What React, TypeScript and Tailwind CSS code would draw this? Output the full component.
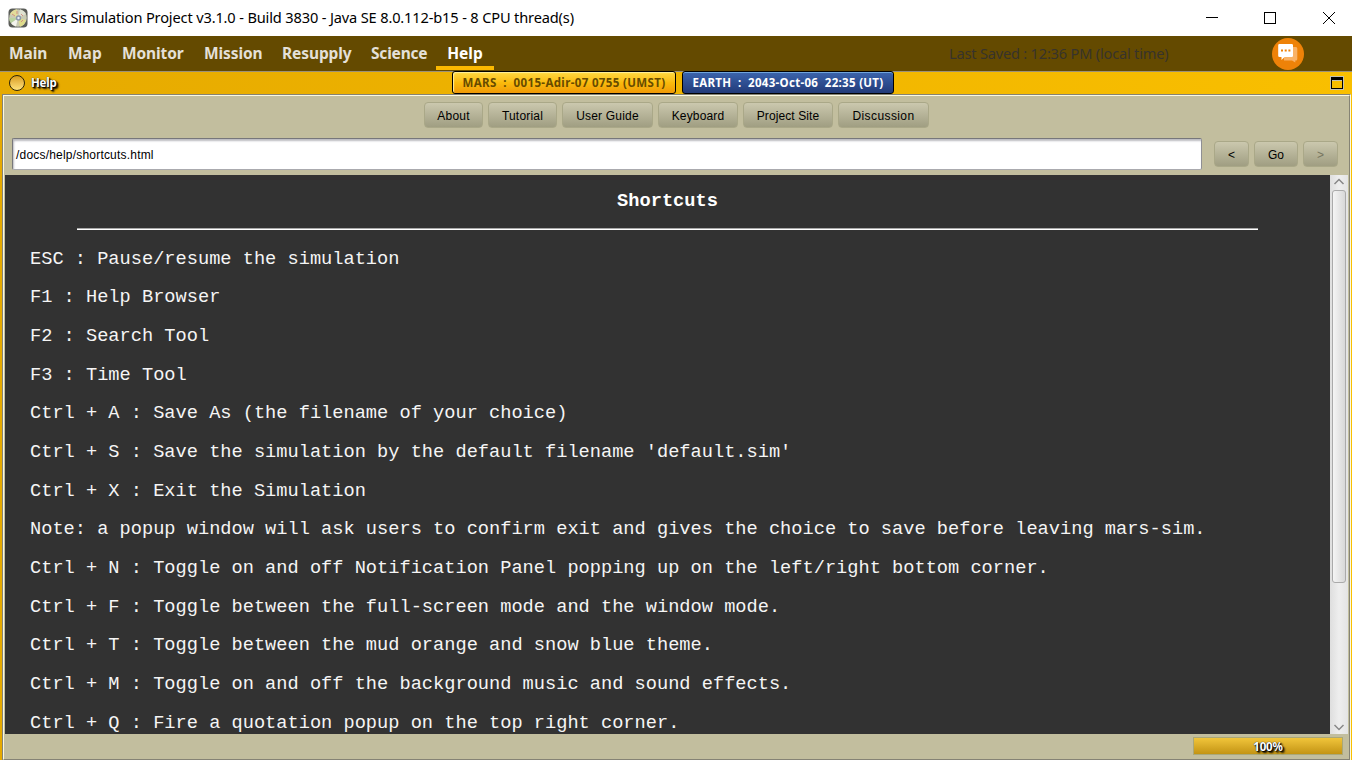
import React from "react";

const menus = [
  { label: "Main", cls: "w-[59px] tracking-[-0.1px]" },
  { label: "Map", cls: "w-[54px] tracking-[0px]" },
  { label: "Monitor", cls: "w-[82px] tracking-[-0.1px]" },
  { label: "Mission", cls: "w-[78px] tracking-[-0.1px]" },
  { label: "Resupply", cls: "w-[89px] tracking-[-0.1px]" },
  { label: "Science", cls: "w-[76px] tracking-[-0.2px]" },
];

const tools = [
  { label: "About", cls: "w-[59px] tracking-[0.2px]" },
  { label: "Tutorial", cls: "w-[69px] tracking-[0.2px]" },
  { label: "User Guide", cls: "w-[91px] tracking-[0.2px]" },
  { label: "Keyboard", cls: "w-[80px] tracking-[0.15px]" },
  { label: "Project Site", cls: "w-[90px] tracking-[0.1px]" },
  { label: "Discussion", cls: "w-[91px] tracking-[0.4px]" },
];

const shortcuts = [
  "ESC : Pause/resume the simulation",
  "F1 : Help Browser",
  "F2 : Search Tool",
  "F3 : Time Tool",
  "Ctrl + A : Save As (the filename of your choice)",
  "Ctrl + S : Save the simulation by the default filename 'default.sim'",
  "Ctrl + X : Exit the Simulation",
  "Note: a popup window will ask users to confirm exit and gives the choice to save before leaving mars-sim.",
  "Ctrl + N : Toggle on and off Notification Panel popping up on the left/right bottom corner.",
  "Ctrl + F : Toggle between the full-screen mode and the window mode.",
  "Ctrl + T : Toggle between the mud orange and snow blue theme.",
  "Ctrl + M : Toggle on and off the background music and sound effects.",
  "Ctrl + Q : Fire a quotation popup on the top right corner.",
];

function Button({ label, cls, disabled = false }: { label: string; cls: string; disabled?: boolean }) {
  return (
    <button
      disabled={disabled}
      className={`flex h-[26px] items-center justify-center rounded-[4px] border border-[#aaa888] bg-linear-to-b from-[#cbc8ae] to-[#a09e82] pt-[2px] font-['Liberation_Sans',sans-serif] text-[12px] whitespace-pre ${disabled ? "text-[#77755f]" : "text-black"} ${cls}`}
    >
      {label}
    </button>
  );
}

function AppIcon() {
  return (
    <svg width="20" height="20" viewBox="0 0 20 20">
      <rect x="0.5" y="0.5" width="19" height="19" rx="4" fill="#5a5c58" />
      <circle cx="10" cy="10" r="8.8" fill="#c9cbb4" />
      <path d="M10 10L2 6A9 9 0 0 1 9 1.200Z" fill="#e3dd9a" />
      <path d="M10 10L12 1.300A9 9 0 0 1 18 6Z" fill="#dfe2d2" />
      <path d="M10 10L18 12A9 9 0 0 1 12 18.700Z" fill="#dfdc8b" />
      <path d="M10 10L8 18.500A9 9 0 0 1 3 15Z" fill="#f4f4ee" />
      <path d="M10 10L3 15A9 9 0 0 1 1.200 10Z" fill="#b9d3a0" />
      <path d="M4 6l3 2M13 6l2 2M13 14l2-2M9 3v3" stroke="#d18f83" strokeWidth="1" />
      <circle cx="10.500" cy="10" r="2.700" fill="#8b98aa" />
      <circle cx="10.500" cy="10" r="1.200" fill="#e8edf2" />
    </svg>
  );
}

function ChatIcon() {
  return (
    <svg width="32" height="32" viewBox="0 0 32 32">
      <circle cx="16" cy="16" r="16" fill="#ee8208" />
      <path d="M12 9H24Q25.300 9 25.300 10.500V21Q25.300 22.500 24 22.500H23.300V24.500L20 22.500H12Z" fill="#f9b266" />
      <path d="M7.500 6H19.700Q21 6 21 7.300V17.700Q21 19 19.700 19H12.500L9.500 22V19H7.500Q6.200 19 6.200 17.700V7.300Q6.200 6 7.500 6Z" fill="#fff" />
      <path d="M9 11.500h2v2H9zM12.700 11.500h2v2h-2zM16.400 11.500h2v2h-2z" fill="#ee8208" />
    </svg>
  );
}

export default function App() {
  return (
    <div className="flex h-[760px] w-[1352px] flex-col overflow-hidden bg-[#c2be9e]">
      <header className="flex h-9 shrink-0 items-center bg-white pl-2">
        <AppIcon />
        <h1 className="ml-[5px] w-[1173px] font-['Noto_Sans',sans-serif] text-[14.6px] tracking-[-0.15px] whitespace-pre text-black">
          Mars Simulation Project v3.1.0 - Build 3830 - Java SE 8.0.112-b15 - 8 CPU thread(s)
        </h1>
        <svg width="130" height="14" viewBox="0 0 130 14" fill="none" stroke="#000" shapeRendering="crispEdges">
          <path d="M0 6.500H12M58.500 1.500h11v11h-11z" />
          <path d="M117 1l12 12M129 1l-12 12" shapeRendering="auto" />
        </svg>
      </header>

      <nav className="flex h-[35px] shrink-0 bg-[#644a00] pl-[9px] font-['Noto_Sans',sans-serif] text-[15.5px] leading-[35px] font-bold text-[#e4e0d8]">
        {menus.map((m) => (
          <div key={m.label} className={`whitespace-nowrap ${m.cls}`}>{m.label}</div>
        ))}
        <div className="-ml-[11px] flex h-[34px] w-[58px] justify-center border-b-4 border-[#fbb900] text-white">Help</div>
        <div className="ml-[455px] w-[323px] text-[14.6px] font-normal tracking-[-0.2px] whitespace-nowrap text-[#37332b]">
          Last Saved : 12:36 PM (local time)
        </div>
        <div className="pt-[2px]"><ChatIcon /></div>
      </nav>

      <div className="flex h-[23px] shrink-0 border-t border-[#9b917a] bg-linear-to-r from-[#e6aa00] to-[#f9bf00] font-['Noto_Sans',sans-serif] text-[11.5px] font-bold">
        <div className="flex w-[452px] items-center pl-[9px]">
          <span className="h-4 w-4 rounded-full border-[1.5px] border-[#2c2308] bg-linear-to-b from-[#d99d18] to-[#ffe27a]" />
          <span className="ml-[6px] tracking-[-0.2px] text-white [text-shadow:1px_1px_1px_#000,2px_2px_2px_#000,0_0_1px_#000]">Help</span>
        </div>
        <div className="-mt-px flex h-[23px] w-[224px] items-center justify-center rounded-[3px] border border-black bg-linear-to-b from-[#ffd93e] via-[#fabb0c] to-[#f09a08] tracking-[0.36px] whitespace-pre text-[#664b00] shadow-[inset_1px_1px_1px_#fff0a0]">
          MARS  :  0015-Adir-07 0755 (UMST)
        </div>
        <div className="-mt-px ml-[6px] flex h-[23px] w-[212px] items-center justify-center rounded-[3px] border border-black bg-linear-to-b from-[#3c65ad] to-[#223a78] tracking-[0.3px] whitespace-pre text-white shadow-[inset_0_1px_0_#70a5dc]">
          EARTH  :  2043-Oct-06  22:35 (UT)
        </div>
        <svg className="mt-1 ml-[436px]" width="14" height="14" viewBox="0 0 14 14" shapeRendering="crispEdges">
          <path d="M.5 .5h13v13H.5z" fill="none" stroke="#c5c2b0" />
          <path d="M1.500 1.500h11v11h-11z" fill="none" stroke="#000" />
          <path d="M1 1h12v3H1z" fill="#000" />
          <path d="M2 4h10v1H2z" fill="#c5c2b0" />
        </svg>
      </div>

      <div className="flex min-h-0 flex-1 bg-linear-to-r from-[#e6aa00] to-[#f9bf00] pr-px pl-[2px]">
        <main className="flex flex-1 flex-col border border-b-0 border-t-[#858375] border-r-[#fbf9e1] border-l-[#858375] bg-[#c2be9e]">
          <div className="flex flex-1 flex-col border border-t-[#fbf9e1] border-r-[#858375] border-b-[#858375] border-l-[#fbf9e1] px-px">
            <div className="flex h-[42px] items-start gap-[5px] pt-[6px] pl-[419px]">
              {tools.map((t) => <Button key={t.label} {...t} />)}
            </div>
            <div className="flex h-[37px] items-start pl-[7px]">
              <div className="flex h-8 w-[1190px] items-center rounded-[2px] border border-t-[#77777b] border-r-[#8f8f94] border-b-[#aaaaae] border-l-[#77777b] bg-white pt-[2px] pl-[3px] font-['Liberation_Sans',sans-serif] text-[12px] tracking-[0.2px] text-black shadow-[inset_1px_2px_2px_#bbbbc0]">
                /docs/help/shortcuts.html
              </div>
              <div className="ml-3 flex gap-[5px] pt-[3px]">
                <Button label="<" cls="w-[35px]" />
                <Button label="Go" cls="w-[44px]" />
                <Button label=">" cls="w-[35px]" disabled />
              </div>
            </div>
            <div className="flex h-[559px]">
              <article className="w-[1325px] overflow-hidden bg-[#323232] pl-[25px] font-['Liberation_Mono',monospace] text-[18.667px] leading-[21px] whitespace-pre text-[#f5f5f5]">
                <h2 className="mt-[16px] -ml-[25px] w-[1325px] text-center font-bold text-white">Shortcuts</h2>
                <hr className="mt-[16px] mb-[18.700px] ml-[47px] h-[2px] w-[1181px] border-0 border-t border-b border-t-[#a8a8a8] border-b-white" />
                {shortcuts.map((s) => <p key={s} className="mb-[17.670px]">{s}</p>)}
              </article>
              <aside className="flex w-[18px] flex-col items-center bg-linear-to-r from-[#dedede] via-[#eeeeee] to-[#e4e4e4]">
                <svg className="h-[15px] w-[18px] shrink-0" viewBox="0 0 18 15" fill="none" stroke="#888" strokeWidth="1.5"><path d="M4.500 9L9 4.500L13.500 9" /></svg>
                <div className="h-[393px] w-[14px] rounded-[3px] border border-[#aaa] bg-linear-to-r from-[#f5f5f5] to-[#d8d8d8]" />
                <div className="flex-1" />
                <svg className="h-[15px] w-[18px] shrink-0" viewBox="0 0 18 15" fill="none" stroke="#888" strokeWidth="1.5"><path d="M4.500 6L9 10.500L13.500 6" /></svg>
              </aside>
            </div>
            <footer className="flex h-[25px] justify-end pt-[3px] pr-[5px]">
              <div className="flex h-[18px] w-[150px] items-center justify-center border border-[#aaa878] bg-linear-to-b from-[#f1c53a] to-[#c39412] pt-px font-['Noto_Sans',sans-serif] text-[11.5px] font-bold tracking-[-0.2px] text-white [text-shadow:1px_1px_1px_#000,2px_2px_2px_#000,0_0_1px_#000]">
                100%
              </div>
            </footer>
          </div>
        </main>
      </div>
    </div>
  );
}
